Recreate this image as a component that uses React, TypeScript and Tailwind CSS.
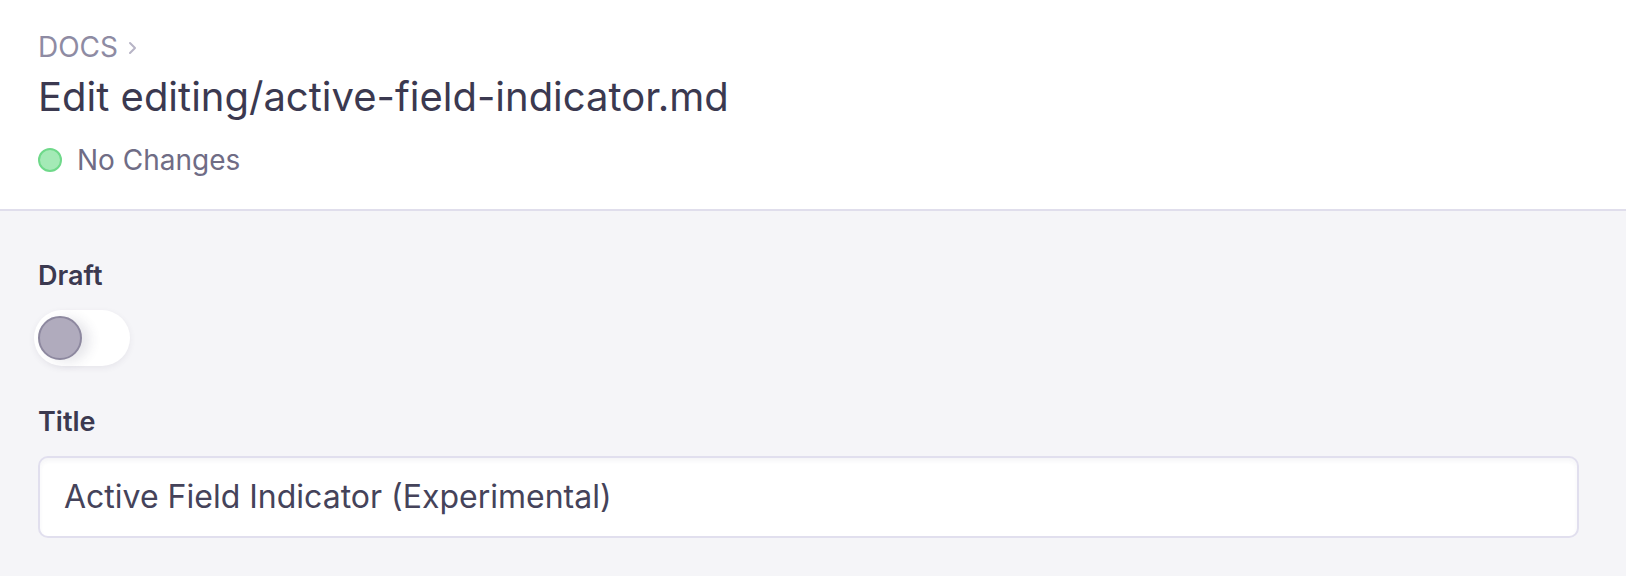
import React from "react";

export default function App() {
  return (
    <div className="min-h-[576px] w-full bg-[#f5f5f8]" style={{ fontFamily: "Inter, 'Noto Sans', sans-serif" }}>
      <header className="bg-white border-b-2 border-[#e0deec] pl-[38px] pt-[30px] pb-[32px]">
        <div className="flex items-center gap-[8px] text-[28px] leading-[34px] text-[#8e8ba3]">
          <span>DOCS</span>
          <svg width="14" height="16" viewBox="0 0 14 16" fill="none" className="mt-[1px]">
            <path d="M4 3l5 5-5 5" stroke="#b7b4c6" strokeWidth="2" strokeLinecap="round" strokeLinejoin="round" />
          </svg>
        </div>
        <h1 className="mt-[9px] text-[40px] leading-[48px] text-[#3b3950] font-normal">
          Edit editing/active-field-indicator.md
        </h1>
        <div className="mt-[22px] flex items-center gap-[15px]">
          <span className="block w-[24px] h-[24px] rounded-full bg-[#a4eab6] border-2 border-[#6fd98a]"></span>
          <span className="text-[28px] leading-[34px] text-[#6f6c85]">No Changes</span>
        </div>
      </header>
      <main className="pl-[38px] pr-[47px] pt-[49px]">
        <label className="block text-[27px] leading-[32px] font-semibold text-[#3b3950]">Draft</label>
        <div className="mt-[18px] -ml-[4px] w-[96px] h-[56px] rounded-full bg-white shadow-[0_2px_6px_rgba(60,55,90,0.08)] flex items-center pl-[4px]">
          <span className="block w-[44px] h-[44px] rounded-full bg-[#b0abbd] border-2 border-[#8d889f] shadow-[8px_2px_12px_rgba(60,55,90,0.12)]"></span>
        </div>
        <label className="block mt-[40px] text-[27px] leading-[32px] font-semibold text-[#3b3950]">Title</label>
        <div className="mt-[18px] h-[82px] rounded-[10px] bg-white border-2 border-[#e1dfee] shadow-[inset_0_3px_4px_rgba(60,55,90,0.05)] flex items-center pl-[24px]">
          <span className="text-[32px] leading-[38px] text-[#45435a]">Active Field Indicator (Experimental)</span>
        </div>
      </main>
    </div>
  );
}
